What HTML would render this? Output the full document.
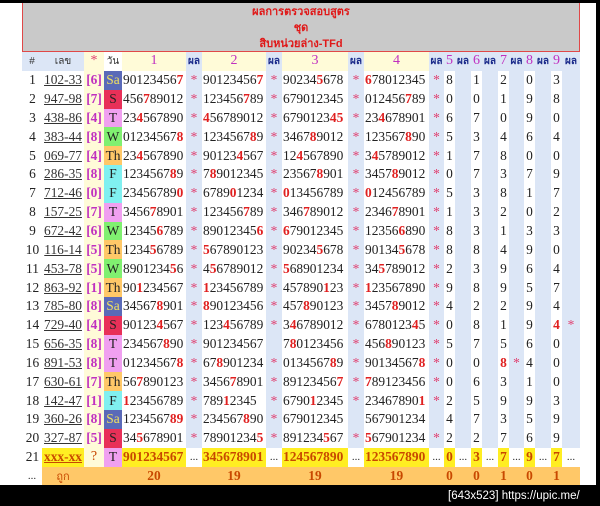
<!DOCTYPE html>
<html><head><meta charset="utf-8"><style>
*{margin:0;padding:0;box-sizing:border-box}
html,body{width:600px;height:506px;overflow:hidden}
body{background:#000;position:relative;font-family:"Liberation Serif","Noto Serif CJK SC",serif}
#pg{position:absolute;left:0;top:3px;width:596px;height:482px;background:#fff}
#title{position:absolute;left:22px;top:3px;width:558px;height:49px;background:#c9c9c9;border:1px solid #e04848;border-top:none;text-align:center;color:#e01818;font:bold 11px "Liberation Sans","Noto Sans CJK SC",sans-serif;line-height:16px;padding-top:1px}
table{position:absolute;left:22px;top:52px;border-collapse:collapse;table-layout:fixed;width:558px;font-size:13.4px;color:#222}
td{height:18.85px;padding:0;white-space:nowrap;overflow:hidden;line-height:16px;text-align:left}
.h td{font-weight:normal;background:#fffbd8;text-align:center;color:#c030c0;font-size:14px}
.h td.p{background:#dce6f6;color:#1a2a8a;font:bold 10px "Liberation Sans","Noto Sans CJK SC",sans-serif}
.h td.g{background:#dce6f6;color:#333;font:10px "Liberation Sans","Noto Sans CJK SC",sans-serif}
.h td.d{background:#dce6f6;color:#c030c0}
td.p{background:#dce6f6;color:#e04070;text-align:center}
td.n{text-align:center;padding-left:1px}
td.c{text-align:left;padding-left:1px}
td.l{text-decoration:underline;color:#333;text-align:center;background:#fff}
td.b{color:#c030c0;font-weight:bold;text-align:center;background:#fffbd8}
td.w{text-align:center}
i{font-style:normal;color:#e02020;font-weight:bold}
.Sa{background:#5a6ab8;color:#f0e060}.S{background:#e83058}.T{background:#f0a0f0}.W{background:#80f070}.Th{background:#ffc868}.F{background:#80f0f0}
.y td{background:#ffee22;color:#c84800;font-weight:bold}
.y td.dot{background:#fff;color:#333;font-weight:normal;font-size:11px;text-align:center}
.y td.u{text-decoration:underline;text-align:center}
.f td{background:#ffc868;color:#c84800;font-weight:bold;text-align:center}
#cr{position:absolute;left:448px;top:489px;color:#fff;font:11.5px "Liberation Sans",sans-serif;white-space:nowrap;line-height:14px}
</style></head><body>
<div id="pg"></div>
<div id="title">ผลการตรวจสอบสูตร<br>ชุด<br>สิบหน่วยล่าง-TFd</div>
<table>
<colgroup><col style="width:20px"><col style="width:42px"><col style="width:20px"><col style="width:18px"><col style="width:64px"><col style="width:16px"><col style="width:64px"><col style="width:16px"><col style="width:66px"><col style="width:16px"><col style="width:65px"><col style="width:15px"><col style="width:11px"><col style="width:16px"><col style="width:11px"><col style="width:16px"><col style="width:11px"><col style="width:15px"><col style="width:11px"><col style="width:16px"><col style="width:11px"><col style="width:18px"></colgroup>
<tr class="h"><td class="g">#</td><td class="g">เลข</td><td style="color:#e04070">*</td><td class="g" style="background:#fff">วัน</td><td>1</td><td class="p">ผล</td><td>2</td><td class="p">ผล</td><td>3</td><td class="p">ผล</td><td>4</td><td class="p">ผล</td><td class="d">5</td><td class="p">ผล</td><td class="d">6</td><td class="p">ผล</td><td class="d">7</td><td class="p">ผล</td><td class="d">8</td><td class="p">ผล</td><td class="d">9</td><td class="p">ผล</td></tr>
<tr><td class="n">1</td><td class="l">102-33</td><td class="b">[6]</td><td class="w Sa">Sa</td><td class="c">90123456<i>7</i></td><td class="p">*</td><td class="c">90123456<i>7</i></td><td class="p">*</td><td class="c">90234<i>5</i>678</td><td class="p">*</td><td class="c"><i>6</i>78012345</td><td class="p">*</td><td class="w">8</td><td class="p"></td><td class="w">1</td><td class="p"></td><td class="w">2</td><td class="p"></td><td class="w">0</td><td class="p"></td><td class="w">3</td><td class="p"></td></tr>
<tr><td class="n">2</td><td class="l">947-98</td><td class="b">[7]</td><td class="w S">S</td><td class="c">456<i>7</i>89012</td><td class="p">*</td><td class="c">123456<i>7</i>89</td><td class="p">*</td><td class="c">679012345</td><td class="p">*</td><td class="c">012456<i>7</i>89</td><td class="p">*</td><td class="w">0</td><td class="p"></td><td class="w">0</td><td class="p"></td><td class="w">1</td><td class="p"></td><td class="w">9</td><td class="p"></td><td class="w">8</td><td class="p"></td></tr>
<tr><td class="n">3</td><td class="l">438-86</td><td class="b">[4]</td><td class="w T">T</td><td class="c">23<i>4</i>567890</td><td class="p">*</td><td class="c"><i>4</i>56789012</td><td class="p">*</td><td class="c">6790123<i>4</i><i>5</i></td><td class="p">*</td><td class="c">23<i>4</i>678901</td><td class="p">*</td><td class="w">6</td><td class="p"></td><td class="w">7</td><td class="p"></td><td class="w">0</td><td class="p"></td><td class="w">9</td><td class="p"></td><td class="w">0</td><td class="p"></td></tr>
<tr><td class="n">4</td><td class="l">383-44</td><td class="b">[8]</td><td class="w W">W</td><td class="c">01234567<i>8</i></td><td class="p">*</td><td class="c">1234567<i>8</i>9</td><td class="p">*</td><td class="c">3467<i>8</i>9012</td><td class="p">*</td><td class="c">123567<i>8</i>90</td><td class="p">*</td><td class="w">5</td><td class="p"></td><td class="w">3</td><td class="p"></td><td class="w">4</td><td class="p"></td><td class="w">6</td><td class="p"></td><td class="w">4</td><td class="p"></td></tr>
<tr><td class="n">5</td><td class="l">069-77</td><td class="b">[4]</td><td class="w Th">Th</td><td class="c">23<i>4</i>567890</td><td class="p">*</td><td class="c">90123<i>4</i>567</td><td class="p">*</td><td class="c">12<i>4</i>567890</td><td class="p">*</td><td class="c">3<i>4</i>5789012</td><td class="p">*</td><td class="w">1</td><td class="p"></td><td class="w">7</td><td class="p"></td><td class="w">8</td><td class="p"></td><td class="w">0</td><td class="p"></td><td class="w">0</td><td class="p"></td></tr>
<tr><td class="n">6</td><td class="l">286-35</td><td class="b">[8]</td><td class="w F">F</td><td class="c">1234567<i>8</i>9</td><td class="p">*</td><td class="c">7<i>8</i>9012345</td><td class="p">*</td><td class="c">23567<i>8</i>901</td><td class="p">*</td><td class="c">3457<i>8</i>9012</td><td class="p">*</td><td class="w">0</td><td class="p"></td><td class="w">7</td><td class="p"></td><td class="w">3</td><td class="p"></td><td class="w">7</td><td class="p"></td><td class="w">9</td><td class="p"></td></tr>
<tr><td class="n">7</td><td class="l">712-46</td><td class="b">[0]</td><td class="w F">F</td><td class="c">23456789<i>0</i></td><td class="p">*</td><td class="c">6789<i>0</i>1234</td><td class="p">*</td><td class="c"><i>0</i>13456789</td><td class="p">*</td><td class="c"><i>0</i>12456789</td><td class="p">*</td><td class="w">5</td><td class="p"></td><td class="w">3</td><td class="p"></td><td class="w">8</td><td class="p"></td><td class="w">1</td><td class="p"></td><td class="w">7</td><td class="p"></td></tr>
<tr><td class="n">8</td><td class="l">157-25</td><td class="b">[7]</td><td class="w T">T</td><td class="c">3456<i>7</i>8901</td><td class="p">*</td><td class="c">123456<i>7</i>89</td><td class="p">*</td><td class="c">346<i>7</i>89012</td><td class="p">*</td><td class="c">2346<i>7</i>8901</td><td class="p">*</td><td class="w">1</td><td class="p"></td><td class="w">3</td><td class="p"></td><td class="w">2</td><td class="p"></td><td class="w">0</td><td class="p"></td><td class="w">2</td><td class="p"></td></tr>
<tr><td class="n">9</td><td class="l">672-42</td><td class="b">[6]</td><td class="w W">W</td><td class="c">12345<i>6</i>789</td><td class="p">*</td><td class="c">89012345<i>6</i></td><td class="p">*</td><td class="c"><i>6</i>79012345</td><td class="p">*</td><td class="c">12356<i>6</i>890</td><td class="p">*</td><td class="w">8</td><td class="p"></td><td class="w">3</td><td class="p"></td><td class="w">1</td><td class="p"></td><td class="w">3</td><td class="p"></td><td class="w">3</td><td class="p"></td></tr>
<tr><td class="n">10</td><td class="l">116-14</td><td class="b">[5]</td><td class="w Th">Th</td><td class="c">1234<i>5</i>6789</td><td class="p">*</td><td class="c"><i>5</i>67890123</td><td class="p">*</td><td class="c">90234<i>5</i>678</td><td class="p">*</td><td class="c">90134<i>5</i>678</td><td class="p">*</td><td class="w">8</td><td class="p"></td><td class="w">8</td><td class="p"></td><td class="w">4</td><td class="p"></td><td class="w">9</td><td class="p"></td><td class="w">0</td><td class="p"></td></tr>
<tr><td class="n">11</td><td class="l">453-78</td><td class="b">[5]</td><td class="w W">W</td><td class="c">8901234<i>5</i>6</td><td class="p">*</td><td class="c">4<i>5</i>6789012</td><td class="p">*</td><td class="c"><i>5</i>68901234</td><td class="p">*</td><td class="c">34<i>5</i>789012</td><td class="p">*</td><td class="w">2</td><td class="p"></td><td class="w">3</td><td class="p"></td><td class="w">9</td><td class="p"></td><td class="w">6</td><td class="p"></td><td class="w">4</td><td class="p"></td></tr>
<tr><td class="n">12</td><td class="l">863-92</td><td class="b">[1]</td><td class="w Th">Th</td><td class="c">90<i>1</i>234567</td><td class="p">*</td><td class="c"><i>1</i>23456789</td><td class="p">*</td><td class="c">457890<i>1</i>23</td><td class="p">*</td><td class="c"><i>1</i>23567890</td><td class="p">*</td><td class="w">9</td><td class="p"></td><td class="w">8</td><td class="p"></td><td class="w">9</td><td class="p"></td><td class="w">5</td><td class="p"></td><td class="w">7</td><td class="p"></td></tr>
<tr><td class="n">13</td><td class="l">785-80</td><td class="b">[8]</td><td class="w Sa">Sa</td><td class="c">34567<i>8</i>901</td><td class="p">*</td><td class="c"><i>8</i>90123456</td><td class="p">*</td><td class="c">457<i>8</i>90123</td><td class="p">*</td><td class="c">3457<i>8</i>9012</td><td class="p">*</td><td class="w">4</td><td class="p"></td><td class="w">2</td><td class="p"></td><td class="w">2</td><td class="p"></td><td class="w">9</td><td class="p"></td><td class="w">4</td><td class="p"></td></tr>
<tr><td class="n">14</td><td class="l">729-40</td><td class="b">[4]</td><td class="w S">S</td><td class="c">90123<i>4</i>567</td><td class="p">*</td><td class="c">123<i>4</i>56789</td><td class="p">*</td><td class="c">3<i>4</i>6789012</td><td class="p">*</td><td class="c">6780123<i>4</i>5</td><td class="p">*</td><td class="w">0</td><td class="p"></td><td class="w">8</td><td class="p"></td><td class="w">1</td><td class="p"></td><td class="w">9</td><td class="p"></td><td class="w"><i>4</i></td><td class="p">*</td></tr>
<tr><td class="n">15</td><td class="l">656-35</td><td class="b">[8]</td><td class="w T">T</td><td class="c">234567<i>8</i>90</td><td class="p">*</td><td class="c">901234567</td><td class="p"></td><td class="c">7<i>8</i>0123456</td><td class="p">*</td><td class="c">456<i>8</i>90123</td><td class="p">*</td><td class="w">5</td><td class="p"></td><td class="w">7</td><td class="p"></td><td class="w">5</td><td class="p"></td><td class="w">6</td><td class="p"></td><td class="w">0</td><td class="p"></td></tr>
<tr><td class="n">16</td><td class="l">891-53</td><td class="b">[8]</td><td class="w T">T</td><td class="c">01234567<i>8</i></td><td class="p">*</td><td class="c">67<i>8</i>901234</td><td class="p">*</td><td class="c">0134567<i>8</i>9</td><td class="p">*</td><td class="c">90134567<i>8</i></td><td class="p">*</td><td class="w">0</td><td class="p"></td><td class="w">0</td><td class="p"></td><td class="w"><i>8</i></td><td class="p">*</td><td class="w">4</td><td class="p"></td><td class="w">0</td><td class="p"></td></tr>
<tr><td class="n">17</td><td class="l">630-61</td><td class="b">[7]</td><td class="w Th">Th</td><td class="c">56<i>7</i>890123</td><td class="p">*</td><td class="c">3456<i>7</i>8901</td><td class="p">*</td><td class="c">89123456<i>7</i></td><td class="p">*</td><td class="c"><i>7</i>89123456</td><td class="p">*</td><td class="w">0</td><td class="p"></td><td class="w">6</td><td class="p"></td><td class="w">3</td><td class="p"></td><td class="w">1</td><td class="p"></td><td class="w">0</td><td class="p"></td></tr>
<tr><td class="n">18</td><td class="l">142-47</td><td class="b">[1]</td><td class="w F">F</td><td class="c"><i>1</i>23456789</td><td class="p">*</td><td class="c">789<i>1</i>2345</td><td class="p">*</td><td class="c">6790<i>1</i>2345</td><td class="p">*</td><td class="c">23467890<i>1</i></td><td class="p">*</td><td class="w">2</td><td class="p"></td><td class="w">5</td><td class="p"></td><td class="w">9</td><td class="p"></td><td class="w">9</td><td class="p"></td><td class="w">3</td><td class="p"></td></tr>
<tr><td class="n">19</td><td class="l">360-26</td><td class="b">[8]</td><td class="w Sa">Sa</td><td class="c">1234567<i>8</i><i>9</i></td><td class="p">*</td><td class="c">234567<i>8</i>90</td><td class="p">*</td><td class="c">679012345</td><td class="p"></td><td class="c">567901234</td><td class="p"></td><td class="w">4</td><td class="p"></td><td class="w">7</td><td class="p"></td><td class="w">3</td><td class="p"></td><td class="w">5</td><td class="p"></td><td class="w">9</td><td class="p"></td></tr>
<tr><td class="n">20</td><td class="l">327-87</td><td class="b">[5]</td><td class="w S">S</td><td class="c">34<i>5</i>678901</td><td class="p">*</td><td class="c">78901234<i>5</i></td><td class="p">*</td><td class="c">891234<i>5</i>67</td><td class="p">*</td><td class="c"><i>5</i>67901234</td><td class="p">*</td><td class="w">2</td><td class="p"></td><td class="w">2</td><td class="p"></td><td class="w">7</td><td class="p"></td><td class="w">6</td><td class="p"></td><td class="w">9</td><td class="p"></td></tr>
<tr class="y"><td class="n" style="background:#fff;color:#222;font-weight:normal">21</td><td class="u">xxx-xx</td><td class="dot" style="font-size:14px;color:#c84800;background:#fffbd8">?</td><td class="w T" style="color:#222;font-weight:normal;background:#f0a0f0">T</td><td class="c">901234567</td><td class="dot">...</td><td class="c">345678901</td><td class="dot">...</td><td class="c">124567890</td><td class="dot">...</td><td class="c">123567890</td><td class="dot">...</td><td class="w">0</td><td class="dot">...</td><td class="w">3</td><td class="dot">...</td><td class="w">7</td><td class="dot">...</td><td class="w">9</td><td class="dot">...</td><td class="w">7</td><td class="dot">...</td></tr>
<tr class="f"><td style="background:#fff;color:#333;font-weight:normal;font-size:11px">...</td><td style="font:11px 'Liberation Sans','Noto Sans CJK SC',sans-serif;color:#c84800">ถูก</td><td></td><td></td><td>20</td><td></td><td>19</td><td></td><td>19</td><td></td><td>19</td><td></td><td>0</td><td></td><td>0</td><td></td><td>1</td><td></td><td>0</td><td></td><td>1</td><td></td></tr>
</table>
<div id="cr">[643x523] https://upic.me/</div>
</body></html>
